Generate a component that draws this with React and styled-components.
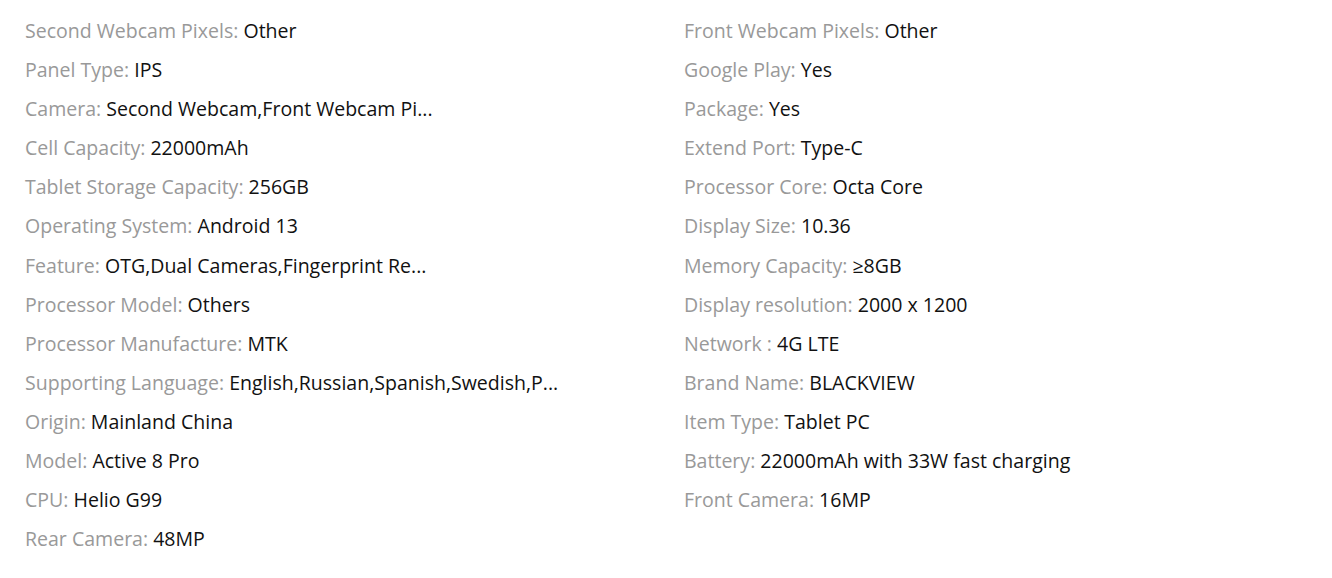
import React from "react";
import styled, { createGlobalStyle } from "styled-components";

const Global = createGlobalStyle`
  html, body { margin: 0; padding: 0; background: #fff; }
  body { font-family: "Open Sans", "Liberation Sans", sans-serif; }
`;

const Wrap = styled.div`
  display: grid;
  grid-template-columns: 659px 659px;
  padding: 11px 0 0 25px;
`;

const Column = styled.ul`
  list-style: none;
  margin: 0;
  padding: 0;
`;

const Row = styled.li`
  font-size: 19.54px;
  line-height: 2;
  white-space: nowrap;
`;

const Label = styled.span`
  color: #999;
`;

const Value = styled.span`
  color: #111;
`;

const left = [
  ["Second Webcam Pixels", "Other"],
  ["Panel Type", "IPS"],
  ["Camera", "Second Webcam,Front Webcam Pi..."],
  ["Cell Capacity", "22000mAh"],
  ["Tablet Storage Capacity", "256GB"],
  ["Operating System", "Android 13"],
  ["Feature", "OTG,Dual Cameras,Fingerprint Re..."],
  ["Processor Model", "Others"],
  ["Processor Manufacture", "MTK"],
  ["Supporting Language", "English,Russian,Spanish,Swedish,P..."],
  ["Origin", "Mainland China"],
  ["Model", "Active 8 Pro"],
  ["CPU", "Helio G99"],
  ["Rear Camera", "48MP"],
];

const right = [
  ["Front Webcam Pixels", "Other"],
  ["Google Play", "Yes"],
  ["Package", "Yes"],
  ["Extend Port", "Type-C"],
  ["Processor Core", "Octa Core"],
  ["Display Size", "10.36"],
  ["Memory Capacity", "≥8GB"],
  ["Display resolution", "2000 x 1200"],
  ["Network ", "4G LTE"],
  ["Brand Name", "BLACKVIEW"],
  ["Item Type", "Tablet PC"],
  ["Battery", "22000mAh with 33W fast charging"],
  ["Front Camera", "16MP"],
];

const List = ({ items }) => (
  <Column>
    {items.map(([k, v]) => (
      <Row key={k}>
        <Label>{k}:</Label> <Value>{v}</Value>
      </Row>
    ))}
  </Column>
);

export default function App() {
  return (
    <>
      <Global />
      <Wrap>
        <List items={left} />
        <List items={right} />
      </Wrap>
    </>
  );
}
